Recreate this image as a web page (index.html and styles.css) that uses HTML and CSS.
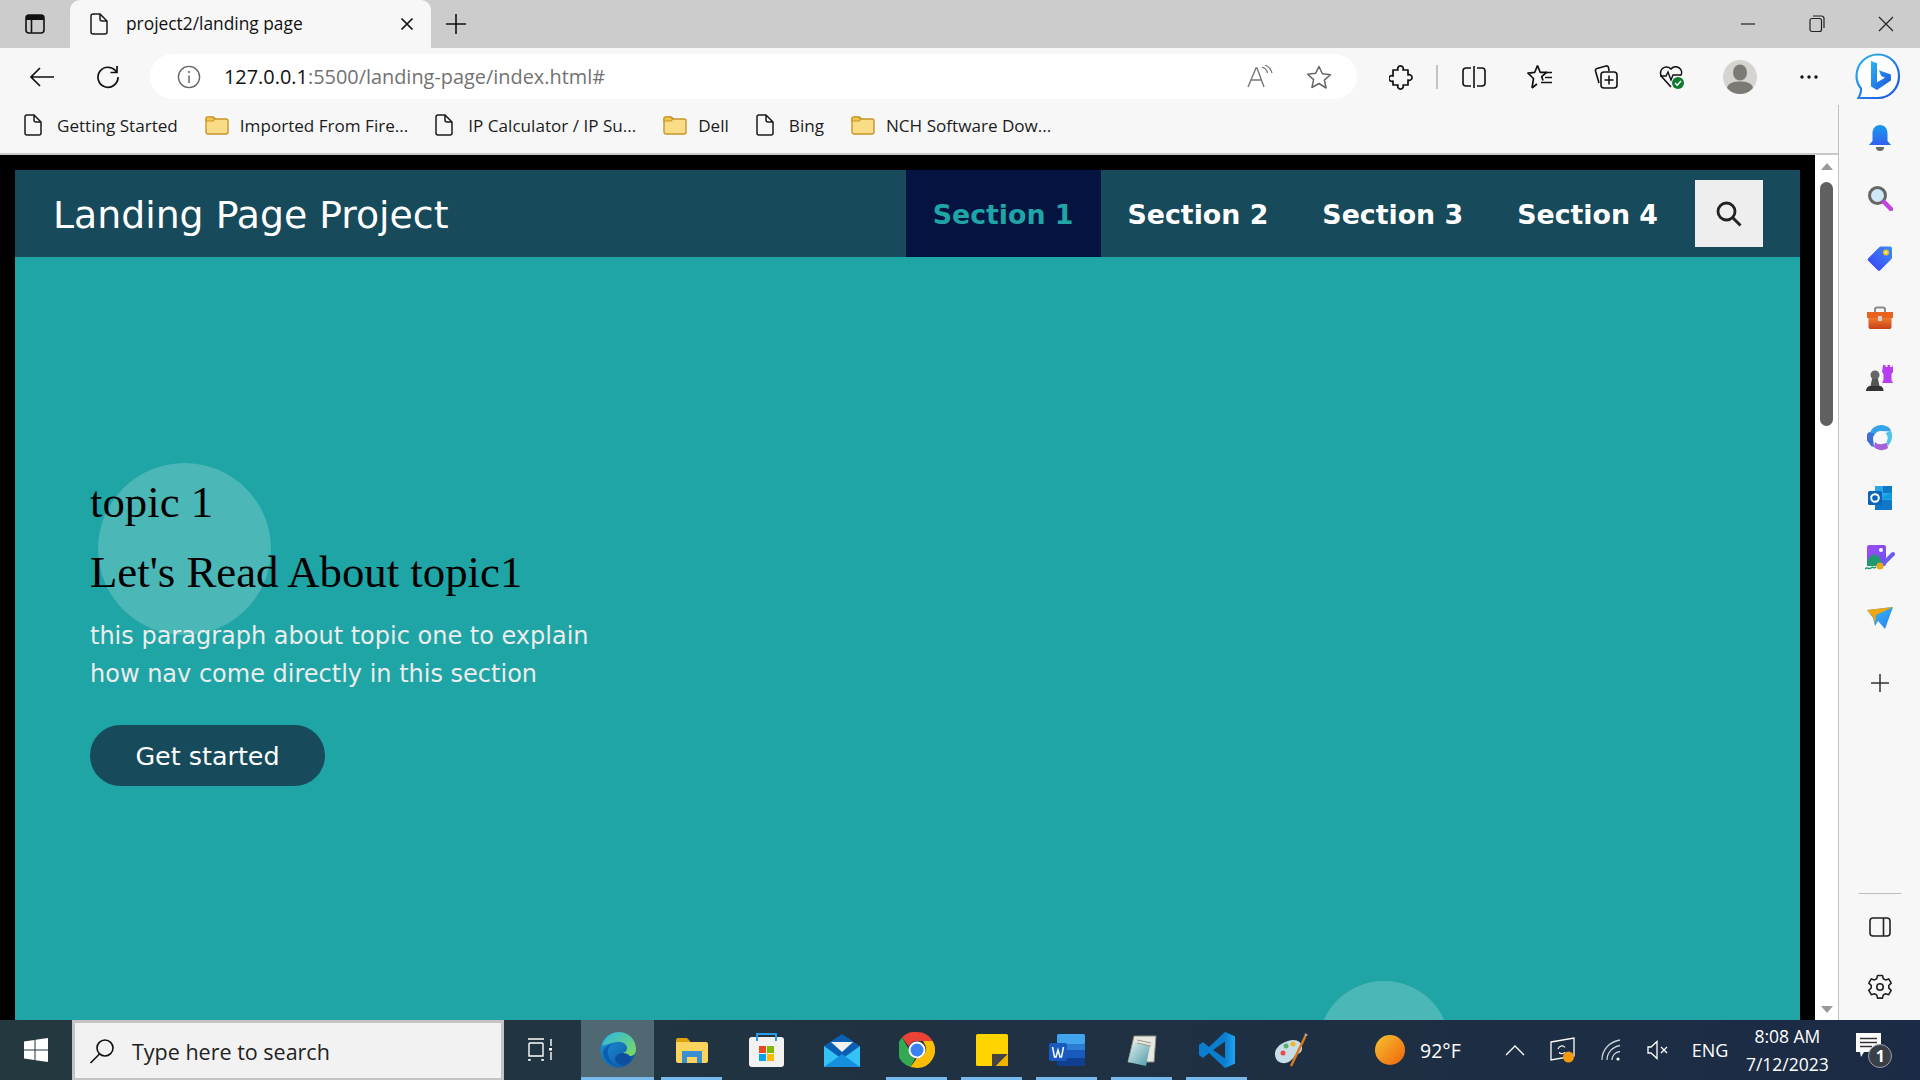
FILE: index.html
```html
<!DOCTYPE html>
<html lang="en">
<head>
  <meta charset="UTF-8">
  <title>project2/landing page</title>
  <link rel="stylesheet" href="styles.css">
</head>
<body>
  <svg class="defs" width="0" height="0">
    <defs>
      <symbol id="doc" viewBox="0 0 18 22">
        <path d="M3 1h7l7 7v11a2 2 0 0 1-2 2H3a2 2 0 0 1-2-2V3a2 2 0 0 1 2-2zM10 1v5a2 2 0 0 0 2 2h5" fill="none" stroke="#1b1b1b" stroke-width="1.5"/>
      </symbol>
      <symbol id="folder" viewBox="0 0 24 20">
        <path d="M1 4a2 2 0 0 1 2-2h5l3 2h10a2 2 0 0 1 2 2v11a2 2 0 0 1-2 2H3a2 2 0 0 1-2-2z" fill="#fbdc86" stroke="#c6952a" stroke-width="1.4"/>
        <path d="M1 6V3.500A2 2 0 0 1 3 2h4l3 2-2 2z" fill="#f3c74f" stroke="#c6952a" stroke-width="1.2"/>
      </symbol>
      <linearGradient id="blueV" x1="0" y1="0" x2="0" y2="1"><stop offset="0" stop-color="#1a9bea"/><stop offset="1" stop-color="#2f5ff0"/></linearGradient>
      <linearGradient id="tagG" x1="1" y1="0" x2="0" y2="1"><stop offset="0" stop-color="#3a8ff5"/><stop offset="1" stop-color="#3c3cf5"/></linearGradient>
      <linearGradient id="boxG" x1="0" y1="0" x2="0" y2="1"><stop offset="0" stop-color="#f07a2a"/><stop offset="1" stop-color="#c8401a"/></linearGradient>
      <linearGradient id="imgG" x1="0" y1="0" x2="1" y2="1"><stop offset="0" stop-color="#a04cf5"/><stop offset="1" stop-color="#6a50ee"/></linearGradient>
      <linearGradient id="sendG" x1="0" y1="0" x2="1" y2="1"><stop offset="0" stop-color="#36c0f5"/><stop offset="1" stop-color="#2a7ff0"/></linearGradient>
      <linearGradient id="bingG" x1="0" y1="0" x2="1" y2="1"><stop offset="0" stop-color="#29b6f0"/><stop offset="1" stop-color="#1d4fe0"/></linearGradient>
      <linearGradient id="edgeG" x1="0" y1="0" x2="1" y2="1"><stop offset="0" stop-color="#1d9be0"/><stop offset="1" stop-color="#0c4f9c"/></linearGradient>
      <linearGradient id="edgeT" x1="0" y1="0" x2="1" y2="1"><stop offset="0" stop-color="#2ab5e8"/><stop offset="1" stop-color="#7fdc5a"/></linearGradient>
      <linearGradient id="sunG" x1="0" y1="0" x2="1" y2="1"><stop offset="0" stop-color="#f4c430"/><stop offset="1" stop-color="#f2620c"/></linearGradient>
      <linearGradient id="vsG" x1="0" y1="0" x2="1" y2="0"><stop offset="0" stop-color="#0a7fcf"/><stop offset="1" stop-color="#1fa5f2"/></linearGradient>
      <linearGradient id="noteG" x1="0" y1="0" x2="1" y2="1"><stop offset="0" stop-color="#dff0f0"/><stop offset="1" stop-color="#4d9aa5"/></linearGradient>
    </defs>
  </svg>

  <div class="tabstrip">
    <div class="tab-toggle">
      <svg width="20" height="20" viewBox="0 0 20 20"><rect x="1" y="1" width="18" height="18" rx="3" fill="none" stroke="#111" stroke-width="1.6"/><path d="M1 4a3 3 0 0 1 3-3h12a3 3 0 0 1 3 3v2H1z" fill="#111"/><path d="M6.500 6v13" stroke="#111" stroke-width="1.6"/></svg>
    </div>
    <div class="tab">
      <svg class="tab-doc" width="18" height="22"><use href="#doc"/></svg>
      <span class="tab-title">project2/landing page</span>
      <svg class="tab-close" width="14" height="14" viewBox="0 0 14 14"><path d="M1.500 1.500l11 11M12.500 1.500l-11 11" stroke="#111" stroke-width="1.7"/></svg>
    </div>
    <div class="tab-new">
      <svg width="22" height="22" viewBox="0 0 22 22"><path d="M11 1v20M1 11h20" stroke="#111" stroke-width="1.6"/></svg>
    </div>
    <div class="win-controls">
      <div class="win-btn"><svg width="16" height="16" viewBox="0 0 16 16"><path d="M1 8h14" stroke="#222" stroke-width="1.2"/></svg></div>
      <div class="win-btn"><svg width="16" height="18" viewBox="0 0 16 18"><rect x="1" y="3.500" width="11.500" height="13" rx="2" fill="none" stroke="#222" stroke-width="1.2"/><path d="M4 1h8.500A2.500 2.500 0 0 1 15 3.500V13" fill="none" stroke="#222" stroke-width="1.2"/></svg></div>
      <div class="win-btn"><svg width="16" height="16" viewBox="0 0 16 16"><path d="M1 1l14 14M15 1L1 15" stroke="#222" stroke-width="1.2"/></svg></div>
    </div>
  </div>

  <div class="toolbar">
    <div class="tool">
      <svg width="26" height="22" viewBox="0 0 26 22"><path d="M25 11H2M11 2l-9 9 9 9" fill="none" stroke="#111" stroke-width="1.7"/></svg>
    </div>
    <div class="tool">
      <svg width="26" height="26" viewBox="0 0 26 26"><path d="M21.500 8A10 10 0 1 0 23 13" fill="none" stroke="#111" stroke-width="1.7"/><path d="M22 2v6.500h-6.500" fill="none" stroke="#111" stroke-width="1.7"/></svg>
    </div>
    <div class="address">
      <svg class="addr-info" width="24" height="24" viewBox="0 0 24 24"><circle cx="12" cy="12" r="10.600" fill="none" stroke="#666" stroke-width="1.4"/><path d="M12 10.500V18" stroke="#666" stroke-width="1.5"/><circle cx="12" cy="7" r="1.100" fill="#666"/></svg>
      <span class="url"><b>127.0.0.1</b>:5500/landing-page/index.html#</span>
      <svg class="addr-read" width="26" height="24" viewBox="0 0 26 24"><path d="M1 22L9 3h1l7 19M4 15h11" fill="none" stroke="#777" stroke-width="1.4"/><path d="M15 2c3 1 5 3 5.500 6M18 0c3.500 1.500 6 4 7 8" fill="none" stroke="#777" stroke-width="1.3"/></svg>
      <svg class="addr-star" width="26" height="24" viewBox="0 0 26 24"><path d="M13 1.500l3.400 7.300 8 .9-6 5.400 1.700 7.900L13 18.500l-7.100 4 1.700-7.900-6-5.400 8-.9z" fill="none" stroke="#666" stroke-width="1.5" stroke-linejoin="round"/></svg>
    </div>
    <div class="tool ext">
      <svg width="24" height="26" viewBox="0 0 24 26"><path d="M4 6h5a2.800 2.800 0 1 1 5 0h5v5a2.800 2.800 0 1 1 0 5v5h-5a2.800 2.800 0 1 1-5 0H4v-4a2.800 2.800 0 1 1 0-5z" fill="none" stroke="#111" stroke-width="1.7" stroke-linejoin="round"/></svg>
    </div>
    <div class="tool-sep"></div>
    <div class="tool">
      <svg width="24" height="22" viewBox="0 0 24 22"><path d="M9 2H4a3 3 0 0 0-3 3v12a3 3 0 0 0 3 3h5M15 2h5a3 3 0 0 1 3 3v12a3 3 0 0 1-3 3h-5" fill="none" stroke="#111" stroke-width="1.6"/><path d="M12 0v22" stroke="#111" stroke-width="1.6"/></svg>
    </div>
    <div class="tool">
      <svg width="26" height="26" viewBox="0 0 26 26"><path d="M10.500 1.500l2.700 6.800H19.500l-4.800 4.400 1.300 3.800M5 24l1.500-9.500L1 9.200l6.800-.9L10.500 1.500M5 24l5-4" fill="none" stroke="#111" stroke-width="1.7" stroke-linejoin="round"/><path d="M18 8.500h7M18 13.500h7M14 18.500h11" stroke="#111" stroke-width="1.6"/></svg>
    </div>
    <div class="tool">
      <svg width="26" height="26" viewBox="0 0 26 26"><path d="M6 19L2.500 7a2 2 0 0 1 1.500-2.500L13 2a2 2 0 0 1 2.500 1.500L16 7" fill="none" stroke="#111" stroke-width="1.6"/><rect x="8" y="8" width="16" height="16" rx="3" fill="#f7f7f7" stroke="#111" stroke-width="1.6"/><path d="M16 11.500v9M11.500 16h9" stroke="#111" stroke-width="1.5"/></svg>
    </div>
    <div class="tool">
      <svg width="26" height="26" viewBox="0 0 26 26"><path d="M12 23L3 13A6 6 0 0 1 12 5a6 6 0 0 1 10 6.500" fill="none" stroke="#111" stroke-width="1.6"/><path d="M1 12h6l2-4 3 8 2-5h8" fill="none" stroke="#111" stroke-width="1.4"/><circle cx="19" cy="19" r="6" fill="#0f7b2e"/><path d="M16 19l2.200 2.200L22 17" fill="none" stroke="#fff" stroke-width="1.500"/></svg>
    </div>
    <div class="tool avatar">
      <svg width="34" height="34" viewBox="0 0 34 34"><circle cx="17" cy="17" r="17" fill="#d6d4d0"/><ellipse cx="17" cy="12.500" rx="7" ry="8" fill="#7d7a76"/><path d="M4 28c1-5 6-6.500 13-6.500S29 23 30 28a17 17 0 0 1-26 0z" fill="#7d7a76"/></svg>
    </div>
    <div class="tool more">
      <svg width="20" height="6" viewBox="0 0 20 6"><circle cx="3" cy="3" r="1.700" fill="#111"/><circle cx="10" cy="3" r="1.700" fill="#111"/><circle cx="17" cy="3" r="1.700" fill="#111"/></svg>
    </div>
    <div class="bing">
      <svg width="46" height="48" viewBox="0 0 46 48"><path d="M23 1.500c12 0 21 9.500 21 21.500 0 12.500-9.500 22-21 22H3.500c1.500-3 3-6.500 2.500-9.500C3 32 1.500 28 1.500 23 1.500 11 11 1.500 23 1.500z" fill="#fff" stroke="url(#bingG)" stroke-width="2.200"/><path d="M16 8l6 2.200v19l8-4.500-3.800-1.800-2.300-5.700 12 4.200v6L22 37l-6-3.500z" fill="url(#bingG)"/></svg>
    </div>
  </div>

  <div class="workspace">
    <div class="browser-main">
      <div class="bookmarks">
        <div class="bookmark"><svg width="18" height="22"><use href="#doc"/></svg><span>Getting Started</span></div>
        <div class="bookmark folder"><svg width="24" height="20"><use href="#folder"/></svg><span>Imported From Fire...</span></div>
        <div class="bookmark"><svg width="18" height="22"><use href="#doc"/></svg><span>IP Calculator / IP Su...</span></div>
        <div class="bookmark folder"><svg width="24" height="20"><use href="#folder"/></svg><span>Dell</span></div>
        <div class="bookmark"><svg width="18" height="22"><use href="#doc"/></svg><span>Bing</span></div>
        <div class="bookmark folder"><svg width="24" height="20"><use href="#folder"/></svg><span>NCH Software Dow...</span></div>
      </div>
      <div class="viewport">
        <div class="page">
          <header class="site-header">
            <div class="site-title">Landing Page Project</div>
            <nav class="site-nav">
              <a class="nav-link active" href="#">Section 1</a>
              <a class="nav-link" href="#">Section 2</a>
              <a class="nav-link" href="#">Section 3</a>
              <a class="nav-link" href="#">Section 4</a>
              <button class="nav-search">
                <svg width="28" height="28" viewBox="0 0 28 28"><circle cx="11.500" cy="11.500" r="8.500" fill="none" stroke="#222" stroke-width="2.800"/><path d="M17.500 17.500l8 8" stroke="#222" stroke-width="3"/></svg>
              </button>
            </nav>
          </header>
          <section class="hero">
            <div class="circle circle-one"></div>
            <div class="circle circle-two"></div>
            <h2 class="hero-topic">topic 1</h2>
            <h2 class="hero-heading">Let's Read About topic1</h2>
            <p class="hero-text">this paragraph about topic one to explain how nav come directly in this section</p>
            <a class="hero-btn" href="#">Get started</a>
          </section>
        </div>
        <div class="scrollbar">
          <div class="arrow-up"></div>
          <div class="thumb"></div>
          <div class="arrow-down"></div>
        </div>
      </div>
    </div>

    <aside class="sidebar">
      <div class="side-item"><svg width="24" height="26" viewBox="0 0 24 26"><path d="M12 0c-5 0-7.500 4-7.500 8.500V16L1 20h22l-3.500-4V8.500C19.500 4 17 0 12 0z" fill="url(#blueV)"/><path d="M8 22h8a4 4 0 0 1-8 0z" fill="#666"/></svg></div>
      <div class="side-item"><svg width="26" height="26" viewBox="0 0 26 26"><circle cx="10.500" cy="10.500" r="8" fill="#cfe8f8" stroke="#666" stroke-width="3"/><path d="M17 17l7 7" stroke="#c23fe0" stroke-width="4.500" stroke-linecap="round"/></svg></div>
      <div class="side-item"><svg width="26" height="26" viewBox="0 0 26 26"><path d="M14 1.500h9a2 2 0 0 1 2 2v9a3 3 0 0 1-1 2L13.500 25a2 2 0 0 1-3 0L1.500 16a2 2 0 0 1 0-3L12 2.500a3 3 0 0 1 2-1z" fill="url(#tagG)"/><circle cx="19" cy="7.500" r="3" fill="#f2c21a"/><circle cx="19" cy="7.500" r="1.200" fill="#fff2b0"/></svg></div>
      <div class="side-item"><svg width="28" height="24" viewBox="0 0 28 24"><path d="M9 6V3.500A2 2 0 0 1 11 1.500h6a2 2 0 0 1 2 2V6" fill="none" stroke="#8a8a8a" stroke-width="2"/><path d="M1 6h26v6H1z" fill="#e8641e"/><path d="M2.500 12h23v9a2 2 0 0 1-2 2h-19a2 2 0 0 1-2-2z" fill="url(#boxG)"/><rect x="12" y="10" width="4" height="5" fill="#cfcfcf"/></svg></div>
      <div class="side-item"><svg width="28" height="28" viewBox="0 0 28 28"><path d="M17 1h2.500v2h2V1h2.500v2h2.500V1H27v7l-1.500 2v6l1.500 3H16l1.500-3v-6L16 8z" fill="#b83df0"/><circle cx="9" cy="11" r="4.500" fill="#666"/><path d="M6 15h6l1.500 7h-9z" fill="#555"/><path d="M0 27c0-3 2-5 4-5h10c2 0 3.500 2 3.500 5z" fill="#333"/></svg></div>
      <div class="side-item"><svg width="26" height="28" viewBox="0 0 26 28"><path d="M11 1.500c4-1.500 9 0 12 3l1 3L14 7a7 7 0 0 0-6 3H3c0-4 4-7.500 8-8.500z" fill="#35a4e8"/><path d="M2 8a7 7 0 0 0 0 11l2 3 3 1-1-9a7 7 0 0 1 2-4z" fill="#3c6fd8"/><path d="M7 23c4 4 10 4 14 1l-1-5-5 1a7 7 0 0 1-7-2z" fill="#a562d8"/><path d="M24 7c2 4 1.500 10-3 15l-1.500-4a7 7 0 0 0-1-9z" fill="#4fc3ea"/></svg></div>
      <div class="side-item"><svg width="26" height="26" viewBox="0 0 26 26"><path d="M8 1h16a1 1 0 0 1 1 1v19a1 1 0 0 1-1 1H8z" fill="#2aa6e8"/><path d="M16 1h9v7h-9zM8 15h17v10H8z" fill="#1078c8"/><path d="M8 15l17-7v6z" fill="#0f9be0"/><rect x="1" y="6" width="14" height="14" rx="1.500" fill="#0a64b8"/><circle cx="8" cy="13" r="3.800" fill="none" stroke="#fff" stroke-width="2"/></svg></div>
      <div class="side-item"><svg width="30" height="28" viewBox="0 0 30 28"><rect x="2" y="1" width="19" height="21" rx="2" fill="url(#imgG)"/><circle cx="16" cy="6" r="2" fill="#fff"/><path d="M2 18c3-8 8-9 12-5l3 5v4H2z" fill="#1f9a6e"/><path d="M18 20L28 10" stroke="#6a5cf0" stroke-width="4" stroke-linecap="round"/><circle cx="15" cy="22" r="3.500" fill="#e8a81e"/><path d="M0 25c2-3 4 1 6-1s3 1 5-1" fill="none" stroke="#1f9a6e" stroke-width="1.500"/></svg></div>
      <div class="side-item"><svg width="28" height="22" viewBox="0 0 28 22"><path d="M1 3l26-3-8 22-7-8-3 5-2-8z" fill="url(#sendG)"/><path d="M1 3l26-3L10 8l-1 9-2-7z" fill="#f2a50c"/></svg></div>
      <div class="side-item side-add"><svg width="20" height="20" viewBox="0 0 20 20"><path d="M10 1v18M1 10h18" stroke="#333" stroke-width="1.500"/></svg></div>
      <div class="side-bottom">
        <div class="side-rule"></div>
        <div class="side-item"><svg width="22" height="20" viewBox="0 0 22 20"><rect x="1" y="1" width="20" height="18" rx="3" fill="none" stroke="#222" stroke-width="1.600"/><path d="M14.500 1v18" stroke="#222" stroke-width="1.600"/></svg></div>
        <div class="side-item"><svg width="26" height="26" viewBox="0 0 26 26"><path d="M10.500 1.500h5l.8 3.200 2.300 1.200 3.100-1 2.500 4.300-2.400 2.300v2.600l2.400 2.300-2.500 4.300-3.100-1-2.300 1.200-.8 3.200h-5l-.8-3.200-2.300-1.200-3.100 1-2.500-4.300L4.200 14v-2.600L1.800 9.200l2.500-4.300 3.100 1 2.300-1.200z" fill="none" stroke="#222" stroke-width="1.600" stroke-linejoin="round"/><circle cx="13" cy="13" r="3.200" fill="none" stroke="#222" stroke-width="1.600"/></svg></div>
      </div>
    </aside>
  </div>

  <footer class="taskbar">
    <div class="start">
      <svg width="24" height="24" viewBox="0 0 24 24"><path d="M0 3.500l10.500-1.500v9.500H0zM11.500 1.800L24 0v11.500H11.500zM0 12.500h10.500V22L0 20.500zM11.500 12.500H24V24l-12.500-1.800z" fill="#fff"/></svg>
    </div>
    <div class="search-box">
      <svg width="26" height="26" viewBox="0 0 26 26"><circle cx="16" cy="10" r="8" fill="none" stroke="#111" stroke-width="1.600"/><path d="M10.500 16L1.500 25" stroke="#111" stroke-width="1.600"/></svg>
      <span>Type here to search</span>
    </div>
    <div class="task-view">
      <svg width="26" height="24" viewBox="0 0 26 24"><path d="M1 1h16M3 5h12a1 1 0 0 1 1 1v12H2V6a1 1 0 0 1 1-1zM1 22h2v-1M17 22h-2v-1M24 1v7M24 14v8" fill="none" stroke="#fff" stroke-width="1.400"/><rect x="22" y="10" width="3" height="2.500" fill="#fff"/></svg>
    </div>
    <div class="task-app current">
      <svg width="36" height="36" viewBox="0 0 36 36"><circle cx="18" cy="18" r="17.500" fill="url(#edgeG)"/><path d="M2 13C5 4 12 0 19 0c9 0 17 7 17 17 0 3-1 5.500-3.500 6.500-3 1.200-8 .5-9.500-2.500 3-1 4-3 4-5 0-4-5-7-11-6-6 1-11 4-14.500 3z" fill="url(#edgeT)"/><path d="M15 11c-5 1-8 6-7 11 1 6 6 10 10 12-6 0-13-4-15-12-1-5 5-10 12-11z" fill="#0c5fb0"/><ellipse cx="23" cy="27" rx="8" ry="6" fill="#0d4f9e"/></svg>
    </div>
    <div class="task-app running">
      <svg width="32" height="26" viewBox="0 0 32 26"><path d="M0 3a2 2 0 0 1 2-2h9l3 3v3H0z" fill="#e0a010"/><path d="M0 5h30a2 2 0 0 1 2 2v17a2 2 0 0 1-2 2H2a2 2 0 0 1-2-2z" fill="#fbd35d"/><path d="M6 26V14h20v12h-5v-6h-10v6z" fill="#3a8fd0"/></svg>
    </div>
    <div class="task-app">
      <svg width="35" height="34" viewBox="0 0 35 34"><rect x="0" y="4" width="35" height="30" rx="3" fill="#f2f2f2"/><path d="M8 8V1h19v7" fill="none" stroke="#2a9be8" stroke-width="2"/><rect x="10" y="13" width="7" height="7" fill="#e8491e"/><rect x="18" y="13" width="7" height="7" fill="#7fba00"/><rect x="10" y="21" width="7" height="7" fill="#00a4ef"/><rect x="18" y="21" width="7" height="7" fill="#ffb900"/></svg>
    </div>
    <div class="task-app">
      <svg width="36" height="33" viewBox="0 0 36 33"><path d="M0 12L18 0l18 12v21H0z" fill="#0a5fb4"/><path d="M7 8h22l-11 10z" fill="#f2f2f2"/><path d="M0 12l18 13 18-13v21H0z" fill="#34c3f4"/><path d="M0 33l18-13 18 13z" fill="#1690de"/></svg>
    </div>
    <div class="task-app running">
      <svg width="36" height="36" viewBox="0 0 36 36"><path d="M18 0a18 18 0 0 1 15.600 9H18a9 9 0 0 0-8.300 5.500L3 5.500A18 18 0 0 1 18 0z" fill="#ea4335"/><path d="M3 5.500l7.800 13.500A9 9 0 0 0 16 26.800L11.600 35A18 18 0 0 1 3 5.500z" fill="#34a853"/><path d="M33.600 9A18 18 0 0 1 18 36l-6.500-1 6.500-9a9 9 0 0 0 7.800-13.500L24 9z" fill="#fbbc04"/><circle cx="18" cy="18" r="8.500" fill="#fff"/><circle cx="18" cy="18" r="6.500" fill="#3b82f0"/></svg>
    </div>
    <div class="task-app running">
      <svg width="32" height="32" viewBox="0 0 32 32"><rect width="32" height="32" rx="1.500" fill="#ffd400"/><path d="M16 32V20h16L20 32z" fill="#444"/><path d="M32 20v10a2 2 0 0 1-2 2H20z" fill="#f0b400"/></svg>
    </div>
    <div class="task-app running">
      <svg width="36" height="32" viewBox="0 0 36 32"><rect x="8" y="0" width="28" height="32" rx="2" fill="#2b7cd3"/><rect x="8" y="0" width="28" height="10" rx="2" fill="#41a5ee"/><rect x="8" y="16" width="28" height="8" fill="#185abd"/><rect x="8" y="24" width="28" height="8" rx="1" fill="#103f91"/><rect x="0" y="9" width="18" height="18" rx="2" fill="#185abd"/><path d="M3.500 13l2 10h1.500l2-7 2 7h1.500l2-10" fill="none" stroke="#fff" stroke-width="1.500"/></svg>
    </div>
    <div class="task-app running">
      <svg width="32" height="32" viewBox="0 0 32 32"><path d="M8 2h22l-2 26H2z" fill="#e8e8e0" stroke="#8a8a7c" stroke-width="1"/><path d="M2 28L8 8l16 4-4 20z" fill="url(#noteG)"/><path d="M11 6l14 3M11 9l14 3" stroke="#9a9a90" stroke-width="1"/></svg>
    </div>
    <div class="task-app running">
      <svg width="36" height="36" viewBox="0 0 36 36"><path d="M26 0l10 4.500v27L26 36 10 21 4 26l-4-3v-10l4-3 6 5z" fill="#0a7fcf"/><path d="M26 0l10 4.500v27L26 36z" fill="url(#vsG)"/><path d="M26 9.500L14 18l12 8.500z" fill="#232f3e"/></svg>
    </div>
    <div class="task-app">
      <svg width="35" height="35" viewBox="0 0 35 35"><path d="M14 8c8-3 15 1 14 8-1 6-6 4-8 8-2 3-6 7-12 6C1 29-1 20 3 15c3-4 7-6 11-7z" fill="#c7dde8"/><circle cx="9" cy="20" r="2.500" fill="#e84c4c"/><circle cx="12" cy="13" r="2.500" fill="#58b368"/><circle cx="19" cy="11" r="2.500" fill="#f0b429"/><path d="M17 33L31 4" stroke="#d97a1e" stroke-width="2.500"/><path d="M30 5l1-5 3 2z" fill="#c8a078"/></svg>
    </div>

    <div class="tray">
      <div class="weather">
        <svg width="30" height="30" viewBox="0 0 30 30"><circle cx="15" cy="15" r="15" fill="url(#sunG)"/></svg>
        <span>92°F</span>
      </div>
      <svg class="tray-chevron" width="20" height="12" viewBox="0 0 20 12"><path d="M1 11l9-9 9 9" fill="none" stroke="#fff" stroke-width="1.400"/></svg>
      <svg class="tray-update" width="26" height="26" viewBox="0 0 26 26"><path d="M1 5l23-4v18L1 23z" fill="none" stroke="#fff" stroke-width="1.300"/><path d="M8 12a4 4 0 0 1 7-1.500M15 15a4 4 0 0 1-6 .5" fill="none" stroke="#fff" stroke-width="1.200"/><circle cx="18.500" cy="20" r="5.500" fill="#f59a0c"/></svg>
      <svg class="tray-wifi" width="22" height="22" viewBox="0 0 22 22"><path d="M1 21C1 11 8 3 19 1M6 21C6 14 11 8 19 6.500M11 21c0-4 3-8 8-8.500" fill="none" stroke="#c8d0d8" stroke-width="1.300"/><circle cx="17" cy="20" r="1.600" fill="#fff"/></svg>
      <svg class="tray-sound" width="22" height="20" viewBox="0 0 22 20"><path d="M1 7h3l6-5.500v17L4 13H1z" fill="none" stroke="#fff" stroke-width="1.300"/><path d="M14 7l6 6M20 7l-6 6" stroke="#fff" stroke-width="1.300"/></svg>
      <span class="tray-lang">ENG</span>
      <div class="clock"><span>8:08 AM</span><span>7/12/2023</span></div>
      <div class="notify">
        <svg width="26" height="26" viewBox="0 0 26 26"><path d="M0 0h25v19H8l-3 5-1-5H0z" fill="#fff"/><path d="M4 5.500h17M4 9.500h17M4 13.500h12" stroke="#333" stroke-width="1.300"/></svg>
        <span class="notify-badge">1</span>
      </div>
    </div>
  </footer>
</body>
</html>
```

FILE: styles.css
```css
* {
  box-sizing: border-box;
}

html, body {
  margin: 0;
  padding: 0;
}

body {
  width: 1920px;
  height: 1080px;
  overflow: hidden;
  display: flex;
  flex-direction: column;
  font-family: "Open Sans", sans-serif;
  background: #f7f7f7;
}

.defs {
  position: absolute;
}

/* browser tabs */
.tabstrip {
  height: 48px;
  flex: none;
  display: flex;
  background: #cccccc;
}

.tab-toggle {
  width: 70px;
  display: flex;
  align-items: center;
  justify-content: center;
}

.tab {
  width: 361px;
  display: flex;
  align-items: center;
  background: #f7f7f7;
  border-radius: 10px 10px 0 0;
  padding: 0 17px 0 20px;
}

.tab-title {
  margin: -2px 0 0 18px;
  flex: 1;
  font-size: 17.35px;
  color: #111;
}

.tab-new {
  width: 50px;
  display: flex;
  align-items: center;
  justify-content: center;
}

.win-controls {
  margin-left: auto;
  display: flex;
}

.win-btn {
  width: 69px;
  display: flex;
  align-items: center;
  justify-content: center;
}

/* address row */
.toolbar {
  height: 57px;
  flex: none;
  display: flex;
  align-items: center;
  padding-left: 9px;
  background: #f7f7f7;
}

.tool {
  width: 66px;
  height: 46px;
  flex: none;
  display: flex;
  align-items: center;
  justify-content: center;
}

.tool.ext {
  margin-left: 11px;
}

.tool.avatar {
  margin-left: 2px;
}

.tool.more {
  margin-left: 3px;
}

.tool-sep {
  width: 2px;
  height: 24px;
  margin: 0 3px 0 2px;
  background: #c4c4c4;
}

.address {
  width: 1207px;
  height: 45px;
  margin-left: 9px;
  flex: none;
  display: flex;
  align-items: center;
  padding: 0 25px 0 27px;
  background: #fff;
  border-radius: 23px;
}

.url {
  margin-left: 23px;
  flex: 1;
  font-size: 19.9px;
  color: #727272;
}

.url b {
  font-weight: normal;
  color: #111;
}

.addr-star {
  margin-left: 33px;
}

.bing {
  width: 50px;
  flex: none;
  margin-left: 11px;
  display: flex;
  justify-content: center;
}

/* bookmarks + page + sidebar */
.workspace {
  flex: 1;
  display: flex;
  min-height: 0;
}

.browser-main {
  width: 1838px;
  display: flex;
  flex-direction: column;
}

.bookmarks {
  height: 50px;
  flex: none;
  display: flex;
  align-items: center;
  padding: 0 0 8px 24px;
  gap: 27px;
  border-bottom: 2px solid #c8c8c8;
}

.bookmark {
  display: flex;
  align-items: center;
  gap: 15px;
  font-size: 17.1px;
  color: #1c1c1c;
}

.bookmark.folder {
  gap: 11px;
}

.viewport {
  flex: 1;
  min-height: 0;
  display: flex;
  background: #000;
  padding-top: 15px;
}

.page {
  width: 1785px;
  margin: 0 15px;
  display: flex;
  flex-direction: column;
  overflow: hidden;
}

.scrollbar {
  width: 23px;
  margin-top: -15px;
  flex: none;
  display: flex;
  flex-direction: column;
  align-items: center;
  background: #fff;
  padding: 8px 0 7px;
}

.arrow-up, .arrow-down {
  width: 0;
  height: 0;
  border-left: 6px solid transparent;
  border-right: 6px solid transparent;
}

.arrow-up {
  border-bottom: 7px solid #9a9a9a;
}

.arrow-down {
  margin-top: auto;
  border-top: 7px solid #9a9a9a;
}

.thumb {
  width: 13px;
  height: 244px;
  margin-top: 12px;
  background: #606060;
  border-radius: 7px;
}

/* the landing page inside the browser */
.site-header {
  height: 87px;
  flex: none;
  display: flex;
  align-items: stretch;
  justify-content: space-between;
  padding: 0 37px 0 38px;
  background: #174a5b;
  font-family: "DejaVu Sans", sans-serif;
  color: #fff;
}

.site-title {
  align-self: center;
  padding-top: 3px;
  font-size: 37.8px;
}

.site-nav {
  display: flex;
  align-items: stretch;
}

.nav-link {
  display: flex;
  align-items: center;
  padding: 1px 27px 0;
  font-size: 26.8px;
  font-weight: bold;
  color: #fff;
  text-decoration: none;
}

.nav-link.active {
  background: #04133f;
  color: #1fa5a6;
}

.nav-search {
  width: 68px;
  height: 67px;
  margin: 10px 0 0 10px;
  border: none;
  padding: 0;
  background: #eeeeee;
  display: flex;
  align-items: center;
  justify-content: center;
}

.hero {
  flex: 1;
  position: relative;
  padding: 221px 0 0 75px;
  background: #1fa5a6;
  font-family: "DejaVu Sans", sans-serif;
}

.circle {
  position: absolute;
  border-radius: 50%;
  background: rgba(255, 255, 255, 0.2);
}

.circle-one {
  left: 83px;
  top: 206px;
  width: 173px;
  height: 172px;
}

.circle-two {
  left: 1303px;
  top: 724px;
  width: 132px;
  height: 132px;
}

.hero-topic, .hero-heading {
  position: relative;
  margin: 0 0 21px;
  font-family: "Liberation Serif", serif;
  font-size: 44.8px;
  line-height: 49px;
  font-weight: normal;
  color: #000;
}

.hero-heading {
  margin-bottom: 20px;
}

.hero-text {
  position: relative;
  width: 530px;
  margin: 0 0 32px;
  font-size: 24px;
  line-height: 38px;
  color: #ececec;
}

.hero-btn {
  display: inline-flex;
  align-items: center;
  justify-content: center;
  width: 235px;
  height: 61px;
  border-radius: 31px;
  background: #174a5b;
  color: #fff;
  font-size: 25.4px;
  text-decoration: none;
}

/* edge sidebar */
.sidebar {
  width: 82px;
  flex: none;
  display: flex;
  flex-direction: column;
  align-items: center;
  padding: 3px 0;
  border-left: 1px solid #c0c0c0;
}

.side-item {
  width: 60px;
  height: 60px;
  flex: none;
  display: flex;
  align-items: center;
  justify-content: center;
}

.side-add {
  margin-top: 5px;
}

.side-bottom {
  margin-top: auto;
  display: flex;
  flex-direction: column;
  align-items: center;
}

.side-rule {
  width: 42px;
  height: 1px;
  margin-bottom: 3px;
  background: #bdbdbd;
}

/* windows taskbar */
.taskbar {
  height: 60px;
  flex: none;
  display: flex;
  align-items: stretch;
  background: linear-gradient(90deg, #23383f, #1c2b45);
  color: #fff;
}

.start {
  width: 72px;
  display: flex;
  align-items: center;
  justify-content: center;
}

.search-box {
  width: 432px;
  display: flex;
  align-items: center;
  gap: 17px;
  padding-left: 14px;
  background: #f2f2f2;
  border: 3px solid #c4c4c4;
  border-bottom-width: 2px;
  color: #222;
  font-size: 21.5px;
}

.search-box span {
  padding-top: 2px;
}

.task-view {
  width: 77px;
  display: flex;
  align-items: center;
  justify-content: center;
  padding-right: 6px;
}

.task-app {
  width: 75px;
  display: flex;
  align-items: center;
  justify-content: center;
  position: relative;
}

.task-app.running::after, .task-app.current::after {
  content: "";
  position: absolute;
  left: 7px;
  right: 7px;
  bottom: 0;
  height: 3px;
  background: #76b9ed;
}

.task-app.current {
  width: 73px;
  background: #4f6871;
}

.task-app.current::after {
  left: 0;
  right: 0;
}

.tray {
  flex: 1;
  display: flex;
  align-items: center;
  font-size: 20px;
  padding-left: 46px;
}

.weather {
  display: flex;
  align-items: center;
  gap: 15px;
  font-size: 19.5px;
}

.tray-chevron {
  margin-left: 44px;
}

.tray-update {
  margin-left: 25px;
}

.tray-wifi {
  margin-left: 25px;
}

.tray-sound {
  margin-left: 24px;
}

.tray-lang {
  margin-left: 23px;
  font-size: 18px;
}

.clock {
  width: 82px;
  margin-left: 18px;
  display: flex;
  flex-direction: column;
  align-items: center;
  gap: 6px;
  font-size: 17.5px;
  line-height: 22px;
  white-space: nowrap;
}

.notify {
  position: relative;
  margin-left: 28px;
  display: flex;
  margin-top: -8px;
}

.notify-badge {
  position: absolute;
  left: 12px;
  top: 11px;
  width: 24px;
  height: 24px;
  border-radius: 50%;
  background: #3a3f48;
  border: 1px solid #9aa0a8;
  display: flex;
  align-items: center;
  justify-content: center;
  font-size: 16px;
  font-weight: bold;
}
```
